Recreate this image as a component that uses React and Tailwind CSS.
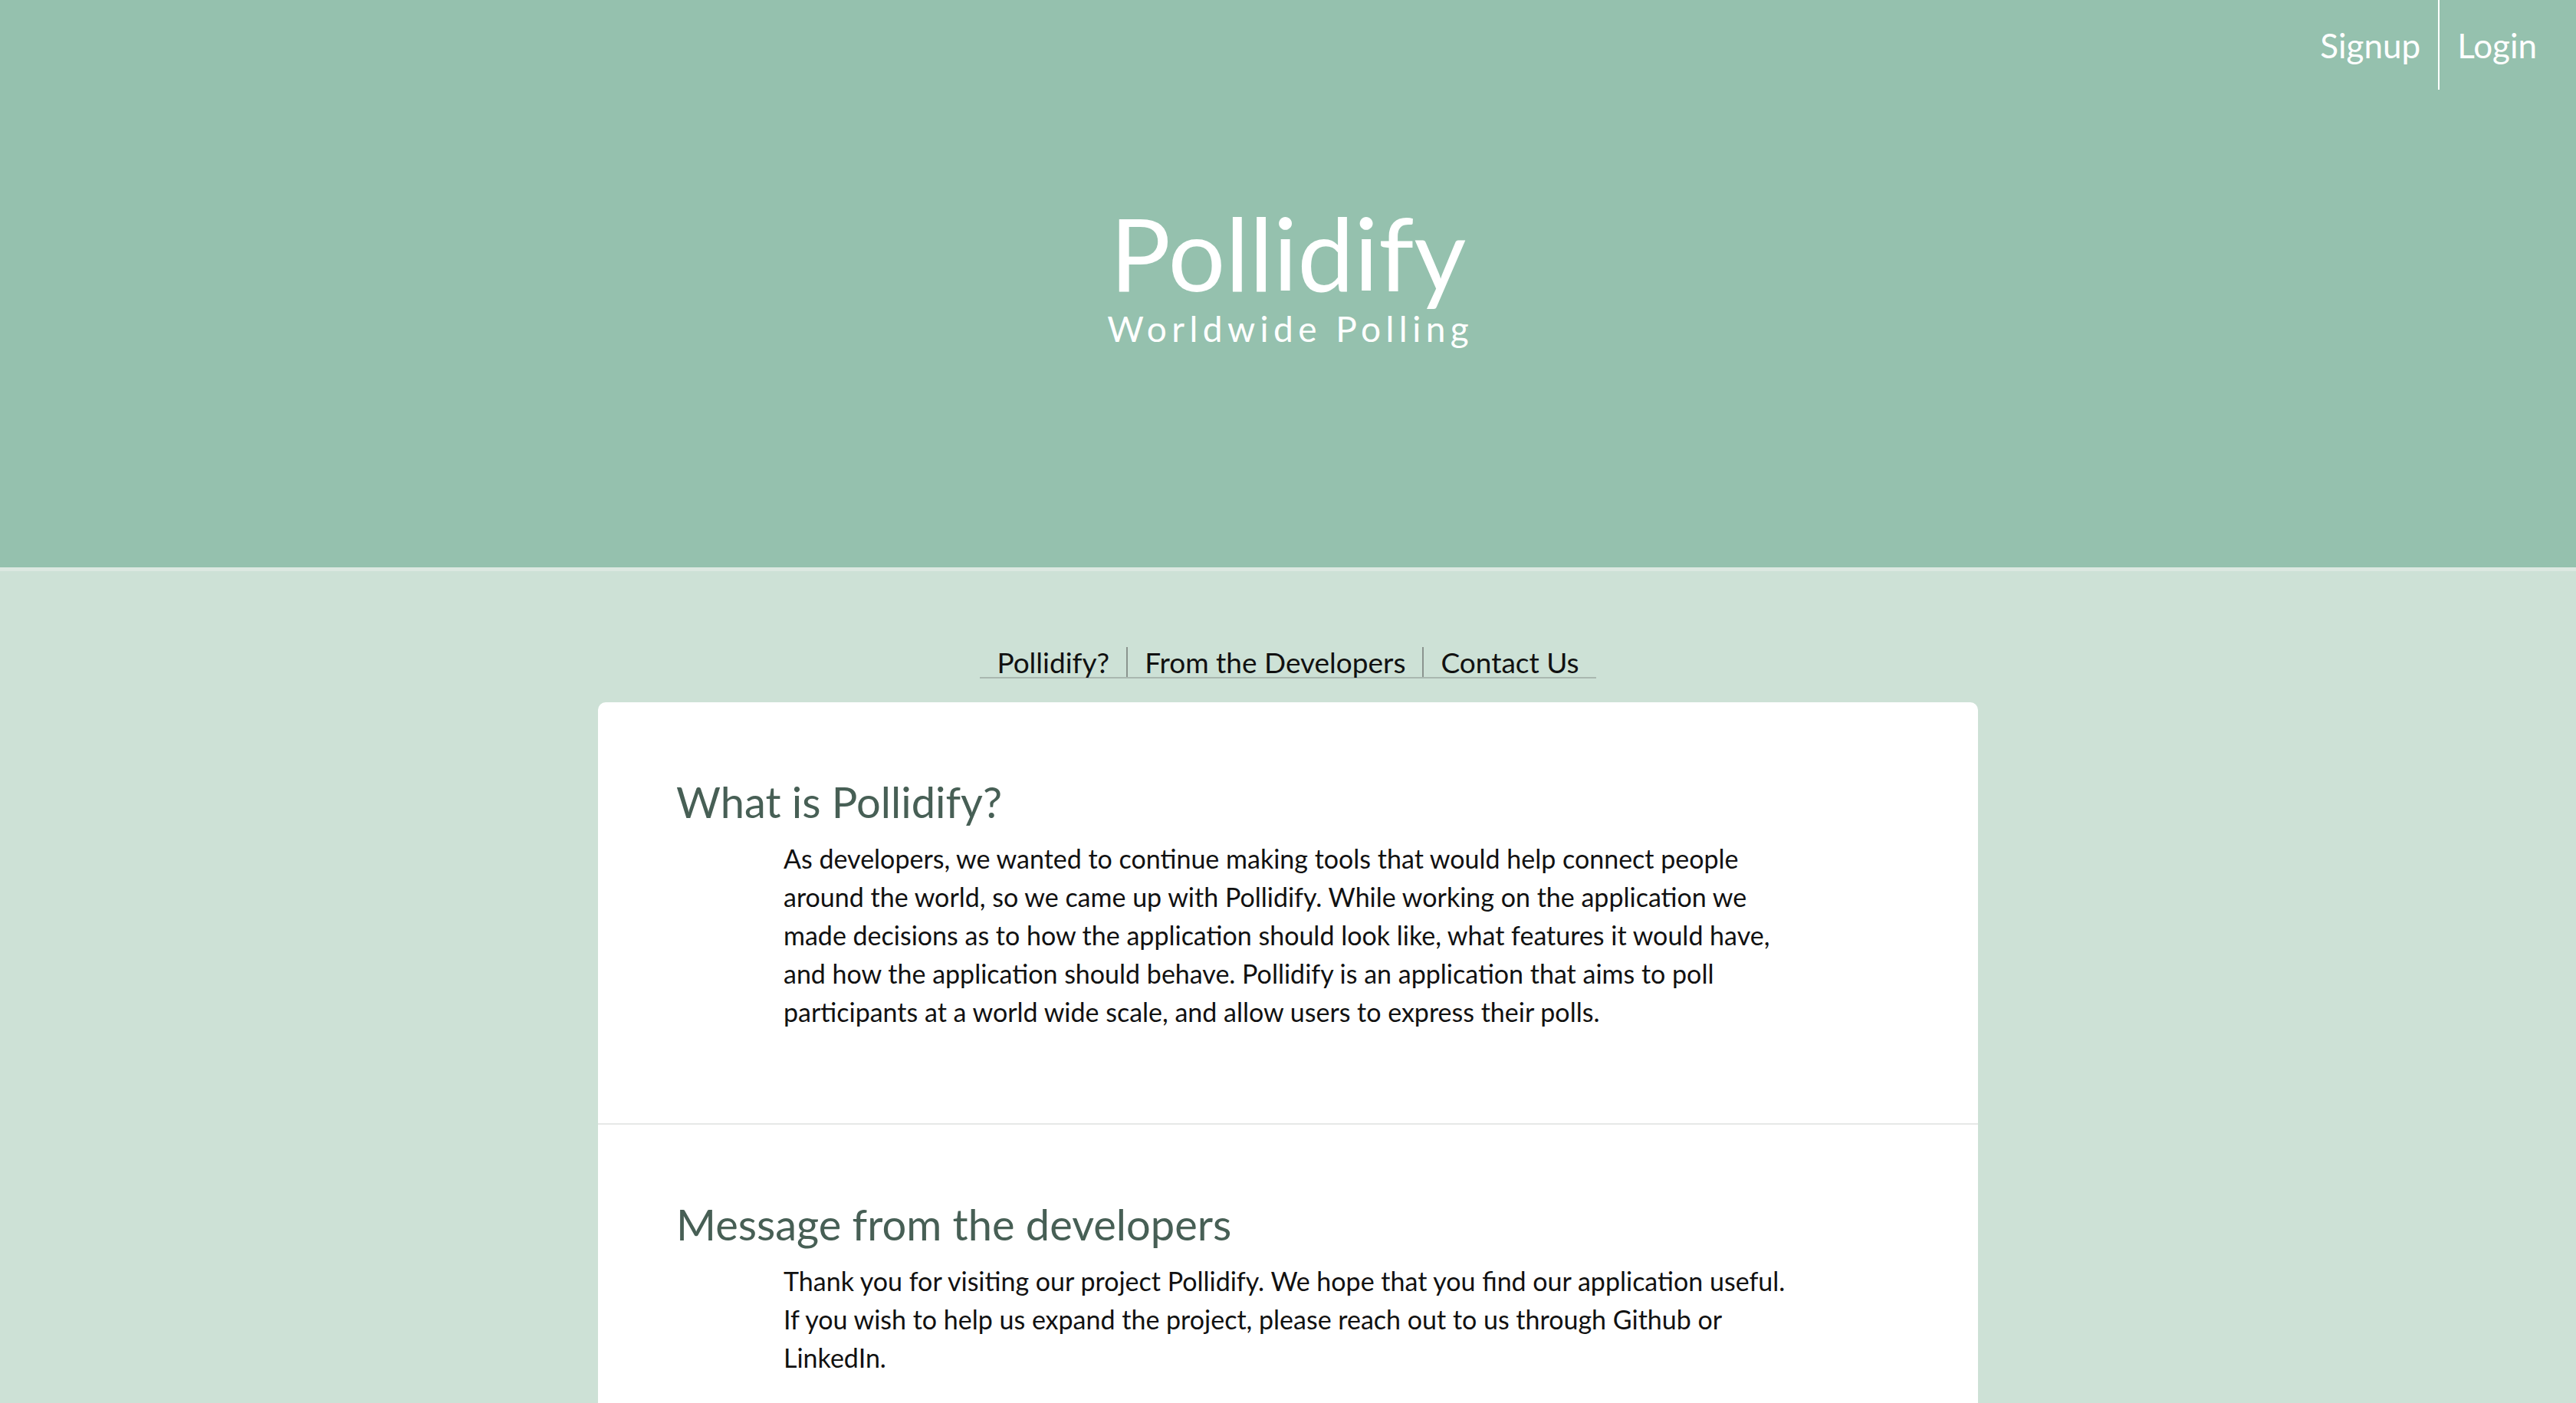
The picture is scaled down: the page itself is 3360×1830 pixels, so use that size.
import React from "react";

const FONT = { fontFamily: "Lato, 'Open Sans', sans-serif" };

const SECTIONS = [
  {
    title: "What is Pollidify?",
    lines: [
      "As developers, we wanted to continue making tools that would help connect people",
      "around the world, so we came up with Pollidify. While working on the application we",
      "made decisions as to how the application should look like, what features it would have,",
      "and how the application should behave. Pollidify is an application that aims to poll",
      "participants at a world wide scale, and allow users to express their polls.",
    ],
  },
  {
    title: "Message from the developers",
    lines: [
      "Thank you for visiting our project Pollidify. We hope that you find our application useful.",
      "If you wish to help us expand the project, please reach out to us through Github or",
      "LinkedIn.",
    ],
  },
];

function TopNav() {
  return (
    <nav className="flex justify-end pr-[28px]">
      <a className="h-[117px] flex items-center px-[23px] text-[44px] text-white">Signup</a>
      <a className="h-[117px] flex items-center px-[23px] text-[44px] text-white border-l-2 border-white">
        Login
      </a>
    </nav>
  );
}

function Section({ title, lines, last }) {
  return (
    <section className={`pt-24 pb-[120px] pl-[102px] ${last ? "" : "border-b-2 border-[#e6e8e7]"}`}>
      <h2 className="text-[56px] leading-[1.2] text-[#475f55]">{title}</h2>
      <p className="mt-[16px] ml-[140px] text-[34px] leading-[50px] text-[#111] whitespace-nowrap">
        {lines.map((l, i) => (
          <React.Fragment key={i}>
            {l}
            {i < lines.length - 1 && <br />}
          </React.Fragment>
        ))}
      </p>
    </section>
  );
}

export default function App() {
  const tabs = ["Pollidify?", "From the Developers", "Contact Us"];
  return (
    <div className="h-screen overflow-hidden bg-[#cde1d6]" style={FONT}>
      <header className="h-[745px] bg-[#95c1ae] border-b-[5px] border-[#dce8e1]">
        <TopNav />
        <div className="flex flex-col items-center text-white">
          <h1 className="mt-[146px] text-[132px] leading-none">Pollidify</h1>
          <p className="mt-[11px] text-[46px] leading-none tracking-[0.14em] pl-[0.14em]">Worldwide Polling</p>
        </div>
      </header>

      <ul className="mt-[99px] mx-auto w-fit flex border-b-2 border-[#a9b8b0]">
        {tabs.map((t, i) => (
          <li
            key={t}
            className={`h-[39px] leading-[39px] px-[22px] text-[37px] text-[#111] ${
              i > 0 ? "border-l-2 border-[#8b948f]" : ""
            }`}
          >
            {t}
          </li>
        ))}
      </ul>

      <main className="mt-[31px] mx-auto w-[1800px] bg-white rounded-t-[10px]">
        {SECTIONS.map((s, i) => (
          <Section key={s.title} {...s} last={i === SECTIONS.length - 1} />
        ))}
      </main>
    </div>
  );
}
